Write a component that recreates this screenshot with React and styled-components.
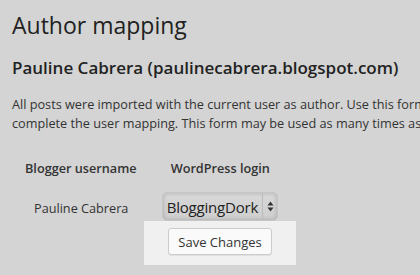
import React from 'react'
import styled, { createGlobalStyle } from 'styled-components'

const GlobalStyle = createGlobalStyle`
  html, body {
    margin: 0;
    padding: 0;
    background: #d4d4d4;
  }
  body {
    font-family: "Open Sans", "Liberation Sans", sans-serif;
    color: #222;
    overflow: hidden;
  }
`

const Page = styled.main`
  width: 420px;
  height: 275px;
  padding: 10px 0 0 12px;
  box-sizing: border-box;
  white-space: nowrap;
  overflow: hidden;
`

const Title = styled.h1`
  margin: 0;
  font-size: 23px;
  font-weight: 400;
  line-height: 30px;
  color: #222;
`

const Blog = styled.h2`
  margin: 16px 0 0;
  font-size: 17px;
  font-weight: 600;
  line-height: 24px;
  color: #222;
`

const Intro = styled.p`
  margin: 15px 0 0;
  font-size: 12.7px;
  line-height: 19px;
  color: #333;
`

const MapTable = styled.table`
  margin-top: 23px;
  border-collapse: collapse;
`

const Head = styled.th`
  padding: 0 0 0 ${p => p.$indent}px;
  text-align: left;
  font-size: 12.7px;
  font-weight: 600;
  line-height: 18px;
  color: #333;
  height: 24px;
`

const Cell = styled.td`
  padding: 12px 0 0 ${p => p.$indent}px;
  font-size: 12.7px;
  color: #333;
  vertical-align: baseline;
`

const Select = styled.div`
  display: inline-flex;
  align-items: stretch;
  height: 29px;
  border: 1px solid #c6c6c6;
  border-radius: 5px;
  background: linear-gradient(#d8d8d8, #cecece);
  box-shadow: inset 0 0 4px rgba(0, 0, 0, 0.2);
  box-sizing: border-box;
`

const SelectValue = styled.span`
  display: flex;
  align-items: center;
  padding: 0 4px 0 4px;
  font-size: 15px;
  letter-spacing: -0.2px;
  color: #222;
`

const SelectArrows = styled.span`
  display: flex;
  align-items: center;
  justify-content: center;
  width: 12px;
  padding: 0 1px;
  border-left: 1px solid #bcbcbc;
`

const Submit = styled.div`
  display: flex;
  justify-content: center;
  width: 152px;
  margin: 0 0 0 132px;
  padding: 7px 0 10px;
  background: #f0f0f0;
`

const Button = styled.button`
  height: 27px;
  padding: 0 9px;
  font-family: inherit;
  font-size: 13px;
  color: #333;
  background: #fafafa;
  border: 1px solid #cccccc;
  border-radius: 3px;
  box-shadow: 0 1px 0 rgba(0, 0, 0, 0.06);
`

const Arrows = () => (
  <svg width="7" height="11" viewBox="0 0 7 11">
    <path d="M3.5 0.5 L6.5 4.5 H0.5 Z M3.5 10.5 L6.5 6.5 H0.5 Z" fill="#333" />
  </svg>
)

export default function App() {
  return (
    <>
      <GlobalStyle />
      <Page>
        <Title>Author mapping</Title>
        <Blog>Pauline Cabrera (paulinecabrera.blogspot.com)</Blog>
        <Intro>
          All posts were imported with the current user as author. Use this form to move each Blogger user's posts to a different WordPress user. You may add users and then return to this page and
          <br />
          complete the user mapping. This form may be used as many times as you like until you activate the "Restart" function below.
        </Intro>
        <MapTable>
          <thead>
            <tr>
              <Head $indent={13}>Blogger username</Head>
              <Head $indent={34}>WordPress login</Head>
            </tr>
          </thead>
          <tbody>
            <tr>
              <Cell $indent={22}>Pauline Cabrera</Cell>
              <Cell $indent={25}>
                <Select>
                  <SelectValue>BloggingDork</SelectValue>
                  <SelectArrows><Arrows /></SelectArrows>
                </Select>
              </Cell>
            </tr>
          </tbody>
        </MapTable>
        <Submit>
          <Button>Save Changes</Button>
        </Submit>
      </Page>
    </>
  )
}
